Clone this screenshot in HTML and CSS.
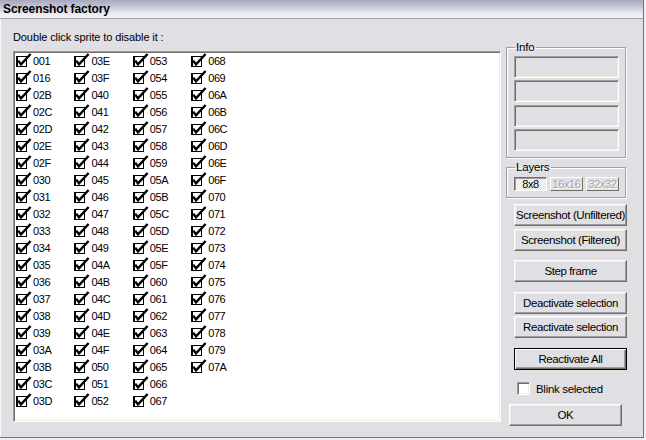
FILE: index.html
```html
<!DOCTYPE html>
<html>
<head>
<meta charset="utf-8">
<title>Screenshot factory</title>
<link rel="stylesheet" href="styles.css">
</head>
<body>
<svg class="defs" width="0" height="0">
  <symbol id="chk" viewBox="0 0 16 15">
    <rect x="0.5" y="3.5" width="10" height="10" fill="#fff" stroke="#000" stroke-width="1"/>
    <path d="M1.5 3.5V14M0 13.5H11" stroke="#000" stroke-width="1" fill="none"/>
    <path d="M2.2 7.6L5 11.4L14.6 1" stroke="#000" stroke-width="2.4" fill="none" stroke-linejoin="miter"/>
  </symbol>
</svg>
<div class="window">
  <div class="titlebar">Screenshot factory</div>
  <div class="client">
    <div class="left">
      <div class="caption">Double click sprite to disable it :</div>
      <div class="listbox">
        <div class="grid">
          <div class="item"><svg class="chk"><use href="#chk"/></svg><span>001</span></div>
          <div class="item"><svg class="chk"><use href="#chk"/></svg><span>016</span></div>
          <div class="item"><svg class="chk"><use href="#chk"/></svg><span>02B</span></div>
          <div class="item"><svg class="chk"><use href="#chk"/></svg><span>02C</span></div>
          <div class="item"><svg class="chk"><use href="#chk"/></svg><span>02D</span></div>
          <div class="item"><svg class="chk"><use href="#chk"/></svg><span>02E</span></div>
          <div class="item"><svg class="chk"><use href="#chk"/></svg><span>02F</span></div>
          <div class="item"><svg class="chk"><use href="#chk"/></svg><span>030</span></div>
          <div class="item"><svg class="chk"><use href="#chk"/></svg><span>031</span></div>
          <div class="item"><svg class="chk"><use href="#chk"/></svg><span>032</span></div>
          <div class="item"><svg class="chk"><use href="#chk"/></svg><span>033</span></div>
          <div class="item"><svg class="chk"><use href="#chk"/></svg><span>034</span></div>
          <div class="item"><svg class="chk"><use href="#chk"/></svg><span>035</span></div>
          <div class="item"><svg class="chk"><use href="#chk"/></svg><span>036</span></div>
          <div class="item"><svg class="chk"><use href="#chk"/></svg><span>037</span></div>
          <div class="item"><svg class="chk"><use href="#chk"/></svg><span>038</span></div>
          <div class="item"><svg class="chk"><use href="#chk"/></svg><span>039</span></div>
          <div class="item"><svg class="chk"><use href="#chk"/></svg><span>03A</span></div>
          <div class="item"><svg class="chk"><use href="#chk"/></svg><span>03B</span></div>
          <div class="item"><svg class="chk"><use href="#chk"/></svg><span>03C</span></div>
          <div class="item"><svg class="chk"><use href="#chk"/></svg><span>03D</span></div>

          <div class="item"><svg class="chk"><use href="#chk"/></svg><span>03E</span></div>
          <div class="item"><svg class="chk"><use href="#chk"/></svg><span>03F</span></div>
          <div class="item"><svg class="chk"><use href="#chk"/></svg><span>040</span></div>
          <div class="item"><svg class="chk"><use href="#chk"/></svg><span>041</span></div>
          <div class="item"><svg class="chk"><use href="#chk"/></svg><span>042</span></div>
          <div class="item"><svg class="chk"><use href="#chk"/></svg><span>043</span></div>
          <div class="item"><svg class="chk"><use href="#chk"/></svg><span>044</span></div>
          <div class="item"><svg class="chk"><use href="#chk"/></svg><span>045</span></div>
          <div class="item"><svg class="chk"><use href="#chk"/></svg><span>046</span></div>
          <div class="item"><svg class="chk"><use href="#chk"/></svg><span>047</span></div>
          <div class="item"><svg class="chk"><use href="#chk"/></svg><span>048</span></div>
          <div class="item"><svg class="chk"><use href="#chk"/></svg><span>049</span></div>
          <div class="item"><svg class="chk"><use href="#chk"/></svg><span>04A</span></div>
          <div class="item"><svg class="chk"><use href="#chk"/></svg><span>04B</span></div>
          <div class="item"><svg class="chk"><use href="#chk"/></svg><span>04C</span></div>
          <div class="item"><svg class="chk"><use href="#chk"/></svg><span>04D</span></div>
          <div class="item"><svg class="chk"><use href="#chk"/></svg><span>04E</span></div>
          <div class="item"><svg class="chk"><use href="#chk"/></svg><span>04F</span></div>
          <div class="item"><svg class="chk"><use href="#chk"/></svg><span>050</span></div>
          <div class="item"><svg class="chk"><use href="#chk"/></svg><span>051</span></div>
          <div class="item"><svg class="chk"><use href="#chk"/></svg><span>052</span></div>

          <div class="item"><svg class="chk"><use href="#chk"/></svg><span>053</span></div>
          <div class="item"><svg class="chk"><use href="#chk"/></svg><span>054</span></div>
          <div class="item"><svg class="chk"><use href="#chk"/></svg><span>055</span></div>
          <div class="item"><svg class="chk"><use href="#chk"/></svg><span>056</span></div>
          <div class="item"><svg class="chk"><use href="#chk"/></svg><span>057</span></div>
          <div class="item"><svg class="chk"><use href="#chk"/></svg><span>058</span></div>
          <div class="item"><svg class="chk"><use href="#chk"/></svg><span>059</span></div>
          <div class="item"><svg class="chk"><use href="#chk"/></svg><span>05A</span></div>
          <div class="item"><svg class="chk"><use href="#chk"/></svg><span>05B</span></div>
          <div class="item"><svg class="chk"><use href="#chk"/></svg><span>05C</span></div>
          <div class="item"><svg class="chk"><use href="#chk"/></svg><span>05D</span></div>
          <div class="item"><svg class="chk"><use href="#chk"/></svg><span>05E</span></div>
          <div class="item"><svg class="chk"><use href="#chk"/></svg><span>05F</span></div>
          <div class="item"><svg class="chk"><use href="#chk"/></svg><span>060</span></div>
          <div class="item"><svg class="chk"><use href="#chk"/></svg><span>061</span></div>
          <div class="item"><svg class="chk"><use href="#chk"/></svg><span>062</span></div>
          <div class="item"><svg class="chk"><use href="#chk"/></svg><span>063</span></div>
          <div class="item"><svg class="chk"><use href="#chk"/></svg><span>064</span></div>
          <div class="item"><svg class="chk"><use href="#chk"/></svg><span>065</span></div>
          <div class="item"><svg class="chk"><use href="#chk"/></svg><span>066</span></div>
          <div class="item"><svg class="chk"><use href="#chk"/></svg><span>067</span></div>

          <div class="item"><svg class="chk"><use href="#chk"/></svg><span>068</span></div>
          <div class="item"><svg class="chk"><use href="#chk"/></svg><span>069</span></div>
          <div class="item"><svg class="chk"><use href="#chk"/></svg><span>06A</span></div>
          <div class="item"><svg class="chk"><use href="#chk"/></svg><span>06B</span></div>
          <div class="item"><svg class="chk"><use href="#chk"/></svg><span>06C</span></div>
          <div class="item"><svg class="chk"><use href="#chk"/></svg><span>06D</span></div>
          <div class="item"><svg class="chk"><use href="#chk"/></svg><span>06E</span></div>
          <div class="item"><svg class="chk"><use href="#chk"/></svg><span>06F</span></div>
          <div class="item"><svg class="chk"><use href="#chk"/></svg><span>070</span></div>
          <div class="item"><svg class="chk"><use href="#chk"/></svg><span>071</span></div>
          <div class="item"><svg class="chk"><use href="#chk"/></svg><span>072</span></div>
          <div class="item"><svg class="chk"><use href="#chk"/></svg><span>073</span></div>
          <div class="item"><svg class="chk"><use href="#chk"/></svg><span>074</span></div>
          <div class="item"><svg class="chk"><use href="#chk"/></svg><span>075</span></div>
          <div class="item"><svg class="chk"><use href="#chk"/></svg><span>076</span></div>
          <div class="item"><svg class="chk"><use href="#chk"/></svg><span>077</span></div>
          <div class="item"><svg class="chk"><use href="#chk"/></svg><span>078</span></div>
          <div class="item"><svg class="chk"><use href="#chk"/></svg><span>079</span></div>
          <div class="item"><svg class="chk"><use href="#chk"/></svg><span>07A</span></div>
        </div>
      </div>
    </div>
    <div class="right">
      <fieldset class="group info">
        <legend>Info</legend>
        <div class="fields">
          <div class="field"></div>
          <div class="field"></div>
          <div class="field"></div>
          <div class="field"></div>
        </div>
      </fieldset>
      <fieldset class="group layers">
        <legend>Layers</legend>
        <div class="toggles">
          <div class="tbtn pressed">8x8</div>
          <div class="tbtn disabled">16x16</div>
          <div class="tbtn disabled">32x32</div>
        </div>
      </fieldset>
      <div class="btn m-unf">Screenshot (Unfiltered)</div>
      <div class="btn m-fil">Screenshot (Filtered)</div>
      <div class="btn m-step">Step frame</div>
      <div class="btn m-deact">Deactivate selection</div>
      <div class="btn m-react">Reactivate selection</div>
      <div class="btn default m-all">Reactivate All</div>
      <div class="blink"><span class="cbox"></span><span>Blink selected</span></div>
      <div class="btn m-ok">OK</div>
    </div>
  </div>
</div>
</body>
</html>
```

FILE: styles.css
```css
html, body {
  margin: 0;
  padding: 0;
}
body {
  background: #eeedf1;
  font-family: "Liberation Sans", Arial, sans-serif;
  font-size: 11px;
  color: #000;
  width: 646px;
  height: 440px;
  overflow: hidden;
}
.defs {
  display: block;
  width: 0;
  height: 0;
  overflow: hidden;
}
.window {
  width: 643px;
  height: 437px;
  border-right: 1px solid #72728a;
  border-bottom: 1px solid #72728a;
  background: #e0dfe3;
  display: flex;
  flex-direction: column;
}
.titlebar {
  height: 18px;
  flex: none;
  border-bottom: 1px solid #a3a3b0;
  background: linear-gradient(to bottom, #a7a7bf 0%, #c4c4d4 35%, #e6e6ee 70%, #f4f4f7 100%);
  font-weight: bold;
  font-size: 12px;
  line-height: 18px;
  padding-left: 3px;
  letter-spacing: -0.1px;
}
.client {
  flex: 1;
  display: flex;
  box-shadow: inset 1px 0 #f6f6f8;
}
.left {
  margin-left: 13px;
  width: 488px;
  display: flex;
  flex-direction: column;
}
.caption {
  margin-top: 12px;
  line-height: 13px;
  height: 13px;
  letter-spacing: -0.1px;
}
.listbox {
  margin-top: 7px;
  height: 371px;
  box-sizing: border-box;
  background: #fff;
  border: 1px solid;
  border-color: #9d9da1 #ffffff #ffffff #9d9da1;
  box-shadow: inset 1px 1px #716f64, inset -1px -1px #f1efe2;
  padding: 1px 1px 1px 2px;
}
.grid {
  display: grid;
  grid-auto-flow: column;
  grid-template-rows: repeat(21, 17px);
  grid-auto-columns: 58.4px;
}
.item {
  display: flex;
  align-items: flex-start;
  height: 17px;
}
.chk {
  width: 16px;
  height: 15px;
  flex: none;
  margin-right: 1px;
}
.item span {
  line-height: 17px;
  letter-spacing: -0.4px;
}
.right {
  margin-left: 5px;
  width: 121px;
  display: flex;
  flex-direction: column;
  align-items: flex-start;
}
.group {
  margin: 0;
  min-width: 0;
  width: 120px;
  box-sizing: border-box;
  border: 1px solid #a09fa6;
  box-shadow: inset 1px 1px #fff, 1px 1px #fff;
  padding: 0 6px 6px 7px;
}
.group legend {
  margin-left: 1px;
  padding: 0 2px 0 1px;
  line-height: 13px;
  font-size: 11.5px;
  letter-spacing: -0.2px;
}
.info {
  margin-top: 22px;
}
.fields {
  margin-top: 2px;
  display: flex;
  flex-direction: column;
  gap: 2.4px;
}
.field {
  height: 22px;
  width: 105px;
  box-sizing: border-box;
  border: 1px solid;
  border-color: #9d9da1 #ffffff #ffffff #9d9da1;
  box-shadow: inset 1px 1px #716f64, inset -1px -1px #f1efe2;
}
.layers {
  margin-top: 3px;
}
.toggles {
  margin-top: 3px;
  display: flex;
  gap: 3px;
}
.tbtn {
  width: 33px;
  height: 14px;
  box-sizing: border-box;
  text-align: center;
  line-height: 12px;
  font-size: 11px;
  border: 1px solid;
  border-color: #fff #716f64 #716f64 #fff;
  letter-spacing: -0.4px;
}
.tbtn.pressed {
  border-color: #716f64 #fff #fff #716f64;
  box-shadow: inset 1px 1px #9d9da1;
  background: repeating-conic-gradient(#ffffff 0 25%, #e0dfe3 0 50%) 0 0 / 2px 2px;
}
.tbtn.disabled {
  color: #a4a3aa;
  text-shadow: 1px 1px #fff;
}
.btn {
  width: 113px;
  height: 22px;
  box-sizing: border-box;
  margin-left: 8px;
  text-align: center;
  line-height: 20px;
  font-size: 11.5px;
  letter-spacing: -0.4px;
  white-space: nowrap;
  border: 1px solid;
  border-color: #fff #716f64 #716f64 #fff;
  box-shadow: inset -1px -1px #9d9da1, inset 1px 1px #f1efe2;
}
.btn.default {
  border: 1px solid #000;
  box-shadow: inset 1px 1px #fff, inset -1px -1px #716f64, inset -2px -2px #9d9da1;
}
.m-unf { margin-top: 6px; }
.m-fil { margin-top: 3px; }
.m-step { margin-top: 9px; }
.m-deact { margin-top: 10px; }
.m-react { margin-top: 2px; }
.m-all { margin-top: 10px; }
.m-ok { margin-top: 9px; margin-left: 3px; }
.blink {
  margin-top: 12px;
  margin-left: 11px;
  display: flex;
  align-items: center;
  height: 13px;
  font-size: 11.5px;
  letter-spacing: -0.3px;
}
.cbox {
  width: 13px;
  height: 13px;
  box-sizing: border-box;
  background: #fff;
  border: 1px solid;
  border-color: #9d9da1 #fff #fff #9d9da1;
  box-shadow: inset 1px 1px #716f64, inset -1px -1px #f1efe2;
  margin-right: 6px;
  flex: none;
}
```
